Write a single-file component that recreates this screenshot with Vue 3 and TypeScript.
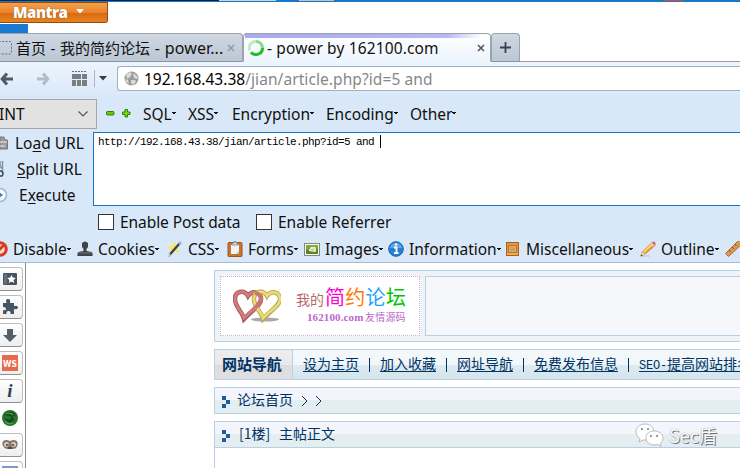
<script setup lang="ts">
interface MenuItem { label: string; width: number }
interface ToolItem extends MenuItem { icon: string }

const menus: MenuItem[] = [
  { label: 'SQL', width: 45 },
  { label: 'XSS', width: 44 },
  { label: 'Encryption', width: 94 },
  { label: 'Encoding', width: 84 },
  { label: 'Other', width: 60 },
]
const tools: ToolItem[] = [
  { label: 'Disable', icon: 'disable', width: 85 },
  { label: 'Cookies', icon: 'user', width: 90 },
  { label: 'CSS', icon: 'wand', width: 60 },
  { label: 'Forms', icon: 'clip', width: 77 },
  { label: 'Images', icon: 'image', width: 84 },
  { label: 'Information', icon: 'info', width: 117 },
  { label: 'Miscellaneous', icon: 'book', width: 135 },
  { label: 'Outline', icon: 'pencil', width: 85 },
  { label: '', icon: 'ruler', width: 20 },
]
const sideIcons: string[] = ['star', 'puzzle', 'down', 'ws', 'i', 'globe', 'mask', 'box']
const links: string[] = ['设为主页', '加入收藏', '网址导航', '免费发布信息']
</script>

<template>
  <div class="screen">
    <div class="strip"><i class="s1"></i><i class="s2"></i><i class="s3"></i><i class="s4"></i><i class="s5"></i><i class="s6"></i></div>
    <div class="titlebar">
      <div class="mantra"><b>Mantra</b><svg width="8" height="5"><path d="M0 0h8L4 4.6z" fill="#fff" /></svg></div>
      <div class="bluebit"></div>
    </div>
    <div class="tabs">
      <div class="tab first">
        <svg class="ph" width="14" height="16"><rect x="-3" y="1.500" width="14.500" height="12.500" rx="1.500" fill="none" stroke="#65707b" stroke-dasharray="2 1.500" /></svg>
        <span class="t1">首页 - 我的简约论坛 <span class="t1b">- power...</span></span>
        <svg class="x" width="8" height="8"><path d="M1 1l6 6M7 1L1 7" stroke="#929ba5" stroke-width="1.600" /></svg>
      </div>
      <div class="tab active">
        <svg class="spin" width="16" height="16" viewBox="0 0 16 16" fill="none" stroke-width="3">
          <path d="M1.700 10.500A6.500 6.500 0 0 1 8 1.500" stroke="#bcedc2" />
          <path d="M8 1.500A6.500 6.500 0 0 1 14.500 8" stroke="#82dc8c" />
          <path d="M14.500 8A6.500 6.500 0 0 1 3 12.200" stroke="#23bd2f" />
        </svg>
        <span class="t2">- power by 162100.com</span>
        <svg class="x" width="8" height="8"><path d="M1 1l6 6M7 1L1 7" stroke="#515961" stroke-width="1.600" /></svg>
      </div>
      <div class="tab plus"><svg width="11" height="11"><path d="M5.500 0v11M0 5.500h11" stroke="#39424c" stroke-width="1.800" /></svg></div>
    </div>
    <div class="nav">
      <svg class="back" width="14" height="14" viewBox="0 0 14 14"><path d="M7 1.500L2.200 7 7 12.500M2.500 7H13" fill="none" stroke="#4d5b68" stroke-width="3" /></svg>
      <svg class="fwd" width="14" height="14" viewBox="0 0 14 14"><path d="M7 1.500L11.800 7 7 12.500M11.500 7H1" fill="none" stroke="#b1bdc9" stroke-width="3" /></svg>
      <svg class="gridicon" width="15" height="15" viewBox="0 0 15 15"><path d="M0 .5h15" stroke="#626970" stroke-dasharray="2 1" /><path d="M0 3h9v5H0zM10 3h5v5h-5zM0 9h4v6H0zM5 9h4v6H5zM10 9h5v6h-5z" fill="#7b7e81" /></svg>
      <i class="sep"></i>
      <svg class="drop" width="8" height="5"><path d="M0 0h8L4 4.500z" fill="#363c42" /></svg>
      <div class="url">
        <svg width="15" height="15" viewBox="0 0 15 15"><circle cx="7.500" cy="7.500" r="7" fill="#9b9b9b" /><path d="M2 3l4-2 2 2-2 3-3 2zM9 2l4 3 1 3-4-1zM7 9l4 0 1 2-3 3-2-2zM1 8l3 1 1 4-3-2z" fill="#dadada" /></svg>
        <span class="host">192.168.43.38</span><span class="path">/jian/article.php?id=5 and</span>
      </div>
    </div>
    <div class="hack">
      <div class="row1">
        <div class="select"><span>INT</span><svg width="10" height="6"><path d="M.5 .5L5 5 9.500 .5" fill="none" stroke="#555" stroke-width="1.200" /></svg></div>
        <svg class="minus" width="9" height="5"><rect x=".5" y=".5" width="7.500" height="3.500" rx="1" fill="#67cc0c" stroke="#2f7f0a" /></svg>
        <svg class="add" width="9" height="9"><path d="M3 .5h2.500V3H8v2.500H5.500V8H3V5.500H.5V3H3z" fill="#70da0c" stroke="#2f850a" /></svg>
        <div class="menus"><div v-for="m in menus" :key="m.label" class="menu" :style="{ width: m.width + 'px' }"><span>{{ m.label }}</span><svg width="4" height="3"><path d="M0 0h4v1H3v1H1V1H0z" fill="#111" /></svg></div></div>
      </div>
      <div class="edit">
        <div class="actions">
          <div class="act"><svg width="8" height="16"><path d="M0 2h4l1 3h2.500v9H0z" fill="#9a9a9a" stroke="#777" /><path d="M0 7h7M0 11h5" stroke="#eee" /></svg><span class="a1">Lo<u>a</u>d URL</span></div>
          <div class="act"><svg width="8" height="18"><path d="M0 1v5l2.500 3V1" fill="none" stroke="#7797a5" stroke-width="1.500" /><path d="M0 11h2q2 3 0 5H0" fill="none" stroke="#39454b" stroke-width="1.500" /></svg><span class="a2"><u>S</u>plit URL</span></div>
          <div class="act"><svg width="8" height="16"><circle cx="0" cy="8" r="6.500" fill="#f7fbff" stroke="#a5b5cb" stroke-width="1.500" /><path d="M-1 5l4 3-4 3z" fill="#327cc8" /></svg><span class="a3">E<u>x</u>ecute</span></div>
        </div>
        <div class="area"><span>http://192.168.43.38/jian/article.php?id=5 and </span><i></i></div>
      </div>
      <div class="checks"><i></i><span class="c1">Enable Post data</span><i></i><span>Enable Referrer</span></div>
      <div class="tools">
        <div v-for="t in tools" :key="t.icon" class="tool" :style="{ width: t.width + 'px' }">
          <svg class="ti" width="16" height="16" viewBox="0 0 16 16">
            <g v-if="t.icon === 'disable'"><circle cx="8" cy="8" r="6.300" fill="#f8dad5" stroke="#dc3a20" stroke-width="3" /><path d="M4 12l8-8" stroke="#dc3a20" stroke-width="3" /></g>
            <g v-if="t.icon === 'user'"><path d="M5 2q3-3 6 0v4L9.500 8v2l5 1q1.500 1 1 4h-15q-.5-3 1-4l5-1V8L5 6z" fill="#3f4548" /><path d="M2 12h12" stroke="#737a7c" /></g>
            <g v-if="t.icon === 'wand'"><path d="M7 0l1 4 5-1-3 4 3 5-5-2-3 4-1-5-4-2 5-2z" fill="#ffe45c" /><path d="M1.500 15L13 2" stroke="#39414d" stroke-width="2.300" /><path d="M12 3l2-2" stroke="#aab3bd" stroke-width="2.500" /><path d="M1 15l2-2" stroke="#d5dbdf" stroke-width="2" /></g>
            <g v-if="t.icon === 'clip'"><rect x="1" y="1.500" width="14" height="14" rx="1" fill="#c6752d" stroke="#a65213" /><path d="M4 4h8v9H4z" fill="#f2f3f7" /><path d="M12 10v3H9z" fill="#b8bec9" /><path d="M5 4V2h2V.5h2V2h2v2z" fill="#d5d8d9" stroke="#777" stroke-width=".7" /></g>
            <g v-if="t.icon === 'image'"><rect x=".5" y="2.500" width="15" height="12" fill="#f8faf5" stroke="#7f8a7d" /><path d="M2 4h12v9H2z" fill="#578528" /><path d="M2 4h12v4L9 6 2 9z" fill="#82a33f" /><path d="M5 10q-1-3 1-2 0-3 3-2 3-1 3 2 1 3-2 3z" fill="#e4ead9" /><circle cx="8.500" cy="9" r="1.200" fill="#dac43b" /></g>
            <g v-if="t.icon === 'info'"><circle cx="8" cy="8" r="7.300" fill="#277fd2" stroke="#1465b8" /><path d="M2 7a6 5 0 0 1 12 0z" fill="#60a5e7" /><path d="M6 6.500h2.500V12M6 12h4.500" fill="none" stroke="#fff" stroke-width="1.800" /><circle cx="8" cy="3.500" r="1.200" fill="#fff" /></g>
            <g v-if="t.icon === 'book'"><rect x="1.500" y="1.500" width="12" height="13" fill="#dd9a48" stroke="#a96118" /><rect x="3.500" y="4.500" width="8" height="7" fill="#e5ae64" stroke="#b97328" /><path d="M5 7h5M5 9h5" stroke="#c98a3d" /><path d="M2 13h11" stroke="#f0c181" /></g>
            <g v-if="t.icon === 'pencil'"><path d="M2 15h8" stroke="#bcc3ca" /><path d="M1 15l1.500-4L12 1.500l3 3L5 13z" fill="#f4a42f" stroke="#c87520" stroke-width=".8" /><path d="M4 11l8-8" stroke="#ffdd81" stroke-width="1.500" /><path d="M11 2.500l2-2q3 0 2.500 3l-1.500 2z" fill="#df6266" /><path d="M11 2l3 3" stroke="#d8dfe5" stroke-width="1.500" /><path d="M.8 15.300l1.700-4L5 13z" fill="#ebd9b2" /><path d="M.5 15.500l.7-2 1.300 1.200z" fill="#333" /></g>
            <g v-if="t.icon === 'ruler'"><path d="M.5 12.500l3 3L17 3l-3-4z" fill="#d69a56" stroke="#ad6c2c" /><path d="M4 9l1.500 2M7 6l2 2M10 3l1.500 2" stroke="#8e541d" /></g>
          </svg>
          <span v-if="t.label">{{ t.label }}</span><svg v-if="t.label" width="4" height="3"><path d="M0 0h4v1H3v1H1V1H0z" fill="#111" /></svg>
        </div>
      </div>
    </div>
    <div class="body">
      <div class="side">
        <div v-for="s in sideIcons" :key="s" class="sb" :class="s">
          <svg width="18" height="20" viewBox="0 -1 18 20">
            <g v-if="s === 'star'"><rect x="2" y="3" width="14" height="12" rx="1" fill="#465461" /><path d="M3 4h3v10H3z" fill="#61707d" /><path d="M10.500 5l1.300 2.600 3 .3-2.200 2 .6 3-2.700-1.500-2.700 1.500.6-3-2.200-2 3-.3z" fill="#fff" /></g>
            <path v-if="s === 'puzzle'" d="M2 5h3.500q-1.500-4 1.500-4t2 4h4v3q4-1 4 1.500T13 11v5H9.500q.5-3-2-3t-2 3H2v-4q3 1 3-1T2 9z" fill="#465665" />
            <path v-if="s === 'down'" d="M6 3h6v6h4l-7 7-7-7h4z" fill="#53616d" />
            <g v-if="s === 'ws'"><rect x="1" y="1" width="16" height="16" fill="#e66a4b" /><text x="9" y="12.500" text-anchor="middle" textLength="14" lengthAdjust="spacingAndGlyphs" class="wst">WS</text></g>
            <text v-if="s === 'i'" x="9" y="15" text-anchor="middle" class="it">i</text>
            <g v-if="s === 'globe'"><circle cx="9" cy="9" r="8" fill="#27752c" /><path d="M3 6q4-5 9-3l3 3-3 1 1 4-4 3q-6 0-5-5l4 2 3-3-3-1z" fill="#144b20" /><path d="M5 5q4-2 7 1M4 12q3 4 8 2" fill="none" stroke="#48a63c" stroke-width="1.300" /></g>
            <g v-if="s === 'mask'"><path d="M1.500 9q-1-5 4.500-5l3 1 3-1q5.500 0 4.500 5-1 4-4.500 4H6q-3.500-1-4.500-4z" fill="#847568" /><circle cx="5.500" cy="8.500" r="2.500" fill="#d5c9bc" /><circle cx="12.500" cy="8.500" r="2.500" fill="#d5c9bc" /><path d="M5 9h2.500M10.500 9H13M7 12h4" stroke="#473b34" stroke-width="1.500" /></g>
            <g v-if="s === 'box'"><rect x="2" y="3" width="14" height="14" fill="#fff" stroke="#5278bd" stroke-width="1.500" /><path d="M6 8h6M9 5v8" stroke="#547fc7" /></g>
          </svg>
        </div>
      </div>
      <div class="page">
        <div class="banner">
          <div class="logo">
            <svg width="48" height="34" viewBox="0 0 48 34"><ellipse cx="32" cy="30.500" rx="14" ry="2" fill="#aaa" /><path d="M11 30C9 22 1 17 2 9 3 1 12 1 15 7c4-6 12-4 13 2 1 7-9 12-17 21z" fill="none" stroke="#a75b5d" stroke-width="4.500" /><path d="M11 29C9 22 1 17 2 9 3 1 12 1 15 7c4-6 12-4 13 2 1 7-9 12-17 20z" fill="none" stroke="#d77c7c" stroke-width="2.500" /><path d="M30 30C28 22 20 17 21 9c1-8 10-8 13-2 4-6 12-4 13 2 1 7-9 12-17 21z" fill="none" stroke="#b9aa56" stroke-width="4.500" /><path d="M30 29C28 22 20 17 21 9c1-8 10-8 13-2 4-6 12-4 13 2 1 7-9 12-17 20z" fill="none" stroke="#ecdc75" stroke-width="2.500" /><path d="M22 4q6 1 6 6-1 4-6 9" fill="none" stroke="#cc7474" stroke-width="4" /></svg>
            <div class="brand">
              <div class="name"><small>我的</small><span class="m">简</span><span class="o">约</span><span class="b">论</span><span class="g">坛</span></div>
              <div class="sub"><span>162100.com</span><span>友情源码</span></div>
            </div>
          </div>
          <div class="ad"></div>
        </div>
        <div class="links"><b>网站导航</b><template v-for="l in links" :key="l"><a>{{ l }}</a><i></i></template><a><em>SEO-</em>提高网站排名</a></div>
        <div class="bar"><svg width="8" height="12"><path d="M0 0h4v4h4v4H4v4H0V8h4V4H0z" fill="#1b5b9f" /></svg><span>论坛首页</span><svg class="gt" width="22" height="12"><path d="M1 1l5 5-5 5M15 1l5 5-5 5" fill="none" stroke="#073766" /></svg></div>
        <div class="bar second"><svg width="8" height="12"><path d="M0 0h4v4h4v4H4v4H0V8h4V4H0z" fill="#1b5b9f" /></svg><span class="floor">[1楼]</span><span>主帖正文</span>
          <div class="wm"><svg width="29" height="25" viewBox="0 0 29 25"><g fill="#fff" stroke="#a8afb2" stroke-width=".8"><path d="M10 1C4 1 1 5 1 9q0 4 4 7l-1 3 4-2q10 1 11-7C19 5 16 1 10 1z" /><path d="M19 8c-5 0-8 3-8 7s4 7 8 7l4-.5 3 2-.6-3Q28 18 28 15c0-4-4-7-9-7z" /></g><g fill="#777"><circle cx="7" cy="6" r="1" /><circle cx="13" cy="6" r="1" /><circle cx="16" cy="13" r="1" /><circle cx="22" cy="13" r="1" /></g></svg><span>Sec盾</span></div>
        </div>
        <div class="rest"></div>
      </div>
    </div>
  </div>
</template>

<style>
html, body { margin: 0; overflow: hidden; }
</style>
<style scoped>
* { box-sizing: border-box; }
svg { display: block; flex: none; }
i { display: block; flex: none; }
.screen { width: 740px; height: 468px; overflow: hidden; background: #fff; display: flex; flex-direction: column; font: 15.5px/20px "Noto Sans", "Noto Sans CJK SC", sans-serif; color: #101010; white-space: nowrap; }
.screen > div { flex: none; }
.strip { height: 2px; background: #1979c8; display: flex; }
.strip i { height: 1px; }
.s1 { width: 219px; background: #09243b; }
.s2 { width: 57px; background: #c8d5dc; }
.s3 { width: 23px; }
.s4 { width: 35px; background: #c6c2ba; }
.s5 { width: 330px; }
.s6 { width: 19px; background: #d94933; }
.titlebar { height: 31px; }
.mantra { width: 108px; height: 21px; display: flex; align-items: center; padding: 0 0 2px 13px; color: #fff; gap: 9px; background: linear-gradient(#f3a047, #e9842d 50%, #db680f 52%, #e58423); border: solid #8e4c19; border-width: 1px 1px 1px 0; border-radius: 0 0 3px 0; font: bold 15px/18px "Open Sans", sans-serif; letter-spacing: -.45px; text-shadow: 0 0 1px #7c3e0c; }
.bluebit { width: 28px; height: 9px; margin-top: 1px; background: #1979d2; }
.tabs { height: 29px; display: flex; border-bottom: 1px solid #9d9aa3; }
.tab { display: flex; align-items: center; height: 29px; border: 1px solid #9da3ab; border-bottom-color: #8e949b; border-radius: 4px 4px 0 0; background: linear-gradient(#cfd8e3, #bac7d5); }
.first { width: 243px; border-left: 0; border-radius: 0 4px 0 0; }
.ph { width: 16px; }
.t1 { width: 211px; font-size: 15px; word-spacing: .7px; }
.t1b { font-size: 16px; letter-spacing: .1px; }
.active { width: 248px; padding-left: 4px; background: linear-gradient(90deg, #a9a9ef, #b8b8f3 85%, #fff) 1px 0 / 237px 4px no-repeat, linear-gradient(#fff, #edf5fd); border-bottom-color: #edf5fd; }
.t2 { margin-left: 3px; width: 210px; letter-spacing: .14px; }
.plus { width: 29px; justify-content: center; }
.nav { height: 33px; display: flex; align-items: center; background: linear-gradient(#edf5fd, #dae9f8); }
.fwd { margin-left: 22px; }
.gridicon { margin-left: 22px; }
.sep { width: 1px; height: 17px; background: #aab8c6; margin-left: 7px; }
.drop { margin-left: 4px; }
.url { margin-left: 10px; width: 624px; height: 25px; background: #fff; border: 1px solid #9fb1c5; border-right: 0; border-radius: 3px 0 0 3px; display: flex; align-items: center; padding-left: 6px; }
.host { margin-left: 5px; color: #000; }
.path { color: #878787; letter-spacing: .08px; }
.hack { height: 168px; background: #d9e8f8; border-bottom: 1px solid #a8bad2; }
.row1 { height: 37px; display: flex; align-items: center; }
.select { width: 97px; height: 30px; background: #e2e2e2; border: 1px solid #a6a6a6; border-left: 0; display: flex; align-items: center; justify-content: space-between; padding-right: 8px; }
.select span { margin-left: -1px; }
.minus { margin-left: 9px; }
.add { margin-left: 7px; }
.menus { display: flex; margin-left: 12px; }
.menu, .tool { display: flex; align-items: center; flex: none; gap: 0; }
.edit { display: flex; height: 74px; }
.actions { width: 93px; }
.act { height: 26px; display: flex; align-items: center; padding-bottom: 5px; }
.a1 { margin-left: 7px; }
.a2 { margin-left: 9px; }
.a3 { margin-left: 11px; }
u { text-underline-offset: 2px; text-decoration-thickness: 1px; }
.area { width: 647px; background: #fff; border: 1px solid #1177ca; border-right: 0; display: flex; padding: 2px 0 0 4px; font: 11px/14px "Liberation Mono", monospace; letter-spacing: -.6px; white-space: pre; color: #000; }
.area i { width: 1px; height: 13px; background: #000; }
.checks { height: 32px; display: flex; align-items: center; padding-left: 98px; }
.checks i { width: 16px; height: 16px; border: 1px solid #333; background: #fff; margin-right: 6px; }
.c1 { width: 136px; letter-spacing: -.07px; }
.tools { display: flex; height: 22px; align-items: center; margin-left: -8px; }
.tool .ti { margin-right: 5px; }
.body { height: 205px; display: flex; }
.side { width: 26px; height: 205px; border-right: 1px solid #8c8c8c; padding-top: 4px; background: #fff; }
.sb { width: 23px; height: 24px; margin-bottom: 4px; border: 1px solid #bfbfbf; border-left: 0; border-bottom-color: #909090; border-radius: 0 4px 4px 0; display: flex; align-items: center; padding-left: 1px; background: linear-gradient(#fff, #eee); }
.globe { border-color: transparent; background: none; height: 22px; }
.wst { font: bold 8px "DejaVu Sans", sans-serif; fill: #fff; }
.it { font: italic bold 19px "Liberation Serif", serif; fill: #33404c; }
.page { margin-left: 188px; width: 526px; padding-top: 7px; }
.banner { height: 72px; border: 1px solid #b9cfe3; border-right: 0; background: #edf3f6; padding: 5px 0 5px 5px; display: flex; gap: 5px; }
.logo { width: 200px; height: 60px; border: 1px dotted #ceb2d4; background: #fff; display: flex; padding: 12px 0 0 12px; }
.ad { width: 315px; height: 60px; border: 1px solid #b9cfe3; border-right: 0; background: #f5f7fb; }
.brand { margin-left: 15px; margin-top: -4px; }
.name { display: flex; align-items: baseline; font: 20px/24px "Noto Sans CJK SC", sans-serif; }
.name small { font-size: 14px; color: #b66a6a; width: 29px; }
.name span { width: 20.300px; }
.m { color: #ff00d4; } .o { color: #ff7800; } .b { color: #1ba1ff; } .g { color: #00c900; }
.sub { display: flex; margin: -1px 0 0 11px; font: 11px/14px "Liberation Serif", "Noto Sans CJK SC", serif; color: #bd67cb; letter-spacing: .12px; gap: 2px; }
.sub span:first-child { width: 56px; font-weight: bold; }
.sub span + span { font: 10px/14px "Noto Sans CJK SC", sans-serif; letter-spacing: .2px; }
.links { height: 31px; margin-top: 7px; border: 1px solid #b9cfe3; border-right: 0; display: flex; align-items: center; font: 14px/18px "Noto Sans CJK SC", sans-serif; color: #003366; background: linear-gradient(#f4f8fb, #f0f6f9 50%, #deebf0 51%, #d4e5eb); overflow: hidden; }
.links b { width: 78px; height: 29px; line-height: 28px; padding-left: 7px; font-size: 15px; letter-spacing: -.1px; border-right: 1px solid #b9cfe3; margin-right: 10px; background: linear-gradient(#eee, #e8e8e8 50%, #dcdcdc 51%, #e0e0e0); flex: none; }
.links a { text-decoration: underline; text-underline-offset: 2px; text-decoration-thickness: 1px; flex: none; padding-bottom: 3px; }
.links i { width: 1px; height: 14px; background: #003366; margin: 0 10px; }
.links em { font: 12px "Liberation Mono", monospace; letter-spacing: -.2px; }
.bar { height: 27px; margin-top: 7px; border: 1px solid #b9cfe3; border-right: 0; background: linear-gradient(#f4f5fc 50%, #e4edf0 50%); display: flex; align-items: center; padding-left: 7px; font: 14px/18px "Noto Sans CJK SC", sans-serif; color: #003366; position: relative; }
.bar > span { margin-left: 7px; padding-bottom: 3px; }
.bar > svg { margin-top: 2px; }
.bar .gt { margin: 0 0 0 8px; }
.bar .floor { width: 33px; margin-left: 9px; }
.rest { height: 20px; border-left: 1px solid #b9cfe3; }
.wm { position: absolute; left: 420px; top: 1px; display: flex; gap: 5px; font: 18px/25px "Noto Sans CJK SC", sans-serif; color: #fdfdfd; text-shadow: 1px 1px 0 #777, 0 0 1px #777; }
</style>
